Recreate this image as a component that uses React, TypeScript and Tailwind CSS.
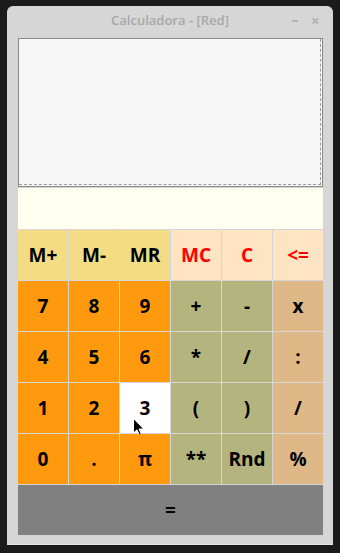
import React from "react";

type Btn = { label: string; bg: string; red?: boolean; hover?: boolean };

const Y = "bg-[#f3dc84]";
const B = "bg-[#ffe4c4]";
const O = "bg-[#ff9a0e]";
const L = "bg-[#b4b47f]";
const T = "bg-[#deb887]";

const buttons: Btn[] = [
  { label: "M+", bg: Y },
  { label: "M-", bg: Y },
  { label: "MR", bg: Y },
  { label: "MC", bg: B, red: true },
  { label: "C", bg: B, red: true },
  { label: "<=", bg: B, red: true },
  { label: "7", bg: O },
  { label: "8", bg: O },
  { label: "9", bg: O },
  { label: "+", bg: L },
  { label: "-", bg: L },
  { label: "x", bg: T },
  { label: "4", bg: O },
  { label: "5", bg: O },
  { label: "6", bg: O },
  { label: "*", bg: L },
  { label: "/", bg: L },
  { label: ":", bg: T },
  { label: "1", bg: O },
  { label: "2", bg: O },
  { label: "3", bg: "bg-white", hover: true },
  { label: "(", bg: L },
  { label: ")", bg: L },
  { label: "/", bg: T },
  { label: "0", bg: O },
  { label: ".", bg: O },
  { label: "π", bg: O },
  { label: "**", bg: L },
  { label: "Rnd", bg: L },
  { label: "%", bg: T },
];

function Cursor() {
  return (
    <svg
      className="absolute left-[13px] top-[35px] pointer-events-none"
      width="12"
      height="19"
      viewBox="0 0 12 19"
    >
      <path
        d="M0.5 0.5 L0.5 15 L4 11.8 L6.6 17.6 L8.6 16.7 L6.1 11 L10.8 11 Z"
        fill="#000"
        stroke="#fff"
        strokeWidth="1"
        strokeLinejoin="round"
      />
    </svg>
  );
}

const FONT = { fontFamily: '"Open Sans", "DejaVu Sans", sans-serif' };

export default function App() {
  return (
    <div className="w-[340px] h-[553px] bg-[#1b1b1b] pt-[6px] pl-[7px] overflow-hidden">
      <div className="w-[326px] h-[539px] bg-[#d6d6d6] rounded-t-[6px] flex flex-col border-b border-[#e4e4e4]">
        <div className="relative h-[32px] flex justify-center pt-[4px]">
          <span
            className="text-[13px] font-semibold text-[#a8a8a8] leading-[20px]"
            style={FONT}
          >
            Calculadora - [Red]
          </span>
          <span className="absolute left-[285px] top-[14px] w-[6px] h-[2px] bg-[#b4b4b4]" />
          <span
            className="absolute left-[304px] top-[4px] text-[15px] font-bold text-[#b0b0b0] leading-[20px]"
            style={FONT}
          >
            ×
          </span>
        </div>
        <div className="pl-[11px] pr-[10px] flex flex-col">
          <div className="h-[149px] border border-[#8a8a8a] bg-[#f7f7f7] flex">
            <div className="flex-1 mr-[1px] mb-[1px] border-r border-b border-dashed border-[#9c9c9c]" />
          </div>
          <div className="h-[41px] mt-[1px] bg-[#fffff0]" />
          <div className="mt-[1px] grid grid-cols-6 gap-[1px]" style={FONT}>
            {buttons.map((b, i) => (
              <div
                key={i}
                className={`relative h-[50px] flex items-center justify-center text-[19px] font-bold ${b.bg} ${
                  b.red ? "text-[#ff0000]" : "text-black"
                }`}
              >
                {b.label}
                {b.hover && <Cursor />}
              </div>
            ))}
          </div>
          <div
            className="mt-[1px] h-[50px] bg-[#808080] flex items-center justify-center text-[19px] font-bold text-black"
            style={FONT}
          >
            =
          </div>
        </div>
      </div>
    </div>
  );
}
